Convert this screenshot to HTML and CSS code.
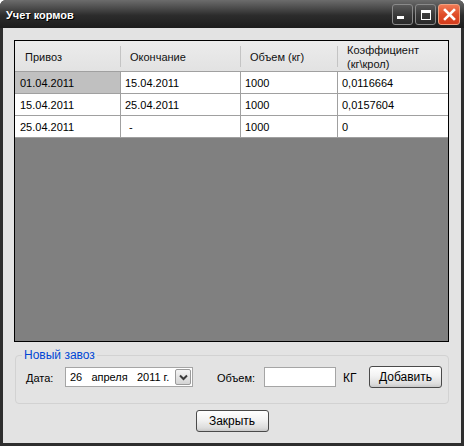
FILE: index.html
```html
<!DOCTYPE html>
<html>
<head>
<meta charset="utf-8">
<link rel="stylesheet" href="styles.css">
</head>
<body>
<div class="window">
  <div class="titlebar">
    <span class="title">Учет кормов</span>
    <div class="tbtns">
      <span class="tb"><span class="min-glyph"></span></span>
      <span class="tb"><span class="max-glyph"></span></span>
      <span class="tb close">
        <svg width="13" height="13" viewBox="0 0 13 13"><path d="M2 2 L11 11 M11 2 L2 11" stroke="#fff" stroke-width="2.6" stroke-linecap="square"/></svg>
      </span>
    </div>
  </div>
  <div class="client">
    <div class="grid">
      <div class="thead">
        <div class="hcell">Привоз</div>
        <div class="hcell">Окончание</div>
        <div class="hcell">Объем (кг)</div>
        <div class="hcell last">Коэффициент<br>(кг\крол)</div>
      </div>
      <div class="row">
        <div class="cell selected">01.04.2011</div>
        <div class="cell">15.04.2011</div>
        <div class="cell">1000</div>
        <div class="cell last">0,0116664</div>
      </div>
      <div class="row">
        <div class="cell">15.04.2011</div>
        <div class="cell">25.04.2011</div>
        <div class="cell">1000</div>
        <div class="cell last">0,0157604</div>
      </div>
      <div class="row">
        <div class="cell">25.04.2011</div>
        <div class="cell dash">-</div>
        <div class="cell">1000</div>
        <div class="cell last">0</div>
      </div>
    </div>
    <div class="group">
      <span class="legend">Новый завоз</span>
      <span class="lbl lbl-date">Дата:</span>
      <div class="datepick">
        <span class="datetext">26   апреля   2011 г.</span>
        <span class="dd">
          <svg width="9" height="7" viewBox="0 0 9 7"><path d="M1 1.5 L4.5 5 L8 1.5" stroke="#3a3a3a" stroke-width="2" fill="none"/></svg>
        </span>
      </div>
      <span class="lbl lbl-vol">Объем:</span>
      <div class="input"></div>
      <span class="lbl lbl-kg">КГ</span>
      <button class="btn">Добавить</button>
    </div>
    <div class="footer">
      <button class="btn">Закрыть</button>
    </div>
  </div>
</div>
</body>
</html>
```
FILE: styles.css
```css
* { box-sizing: border-box; }
html, body { margin: 0; padding: 0; background: #ffffff; }
body {
  font-family: "Liberation Sans", Arial, sans-serif;
  font-size: 11px;
  color: #000;
}
.window {
  width: 464px;
  height: 446px;
  background: #2e2e2e;
  border-radius: 6px 6px 0 0;
  padding: 0 3px 3px 3px;
  display: flex;
  flex-direction: column;
}
.titlebar {
  height: 28px;
  margin: 0 -3px;
  padding: 0 4px 0 6px;
  border-radius: 6px 6px 0 0;
  background: linear-gradient(#6c6c6c 0%, #4a4a4a 30%, #2c2c2c 55%, #1d1d1d 100%);
  display: flex;
  align-items: center;
  justify-content: space-between;
}
.title {
  color: #fff;
  font-weight: bold;
  font-size: 11px;
  text-shadow: 1px 1px 0 #000;
  margin-top: 2px;
}
.tbtns {
  display: flex;
  gap: 2px;
  align-items: center;
  margin-top: 1px;
}
.tb {
  width: 21px;
  height: 21px;
  border: 1px solid #8a8a8a;
  border-radius: 3px;
  background: linear-gradient(#5a5a5a, #3a3a3a 50%, #2a2a2a);
  position: relative;
  display: flex;
  align-items: center;
  justify-content: center;
}
.tb.close {
  width: 22px;
  border-color: #f0a080;
  background: linear-gradient(#f07a55, #e04e2a 50%, #d43c1c);
}
.min-glyph {
  position: absolute;
  left: 4px;
  top: 11px;
  width: 7px;
  height: 3px;
  background: #fff;
}
.max-glyph {
  width: 10px;
  height: 10px;
  border: 1px solid #fff;
  border-top-width: 3px;
}
.client {
  flex: 1;
  background: #e3e3e3;
  padding: 12px 12px 0 11px;
  display: flex;
  flex-direction: column;
}
.grid {
  height: 302px;
  border: 1px solid #000;
  background: #808080;
}
.thead, .row {
  display: grid;
  grid-template-columns: 106px 120px 97px 110px;
}
.thead {
  height: 31px;
  background: linear-gradient(#ececec, #e2e2e2);
  border-bottom: 1px solid #a0a0a0;
}
.hcell {
  position: relative;
  display: flex;
  align-items: center;
  padding: 2px 0 0 9px;
  line-height: 14px;
  color: #111;
}
.hcell:first-child { padding-left: 10px; }
.hcell::after {
  content: "";
  position: absolute;
  right: 0;
  top: 5px;
  bottom: 4px;
  width: 1px;
  background: #c4c4c4;
}
.hcell.last::after { display: none; }
.row {
  height: 22px;
  background: #fff;
  border-bottom: 1px solid #a0a0a0;
}
.cell {
  border-right: 1px solid #a0a0a0;
  display: flex;
  align-items: center;
  padding: 1px 0 0 4px;
  color: #000;
}
.cell:first-child { padding-left: 5px; }
.cell.last { border-right: none; }
.cell.selected { background: #c0c0c0; }
.cell.dash { padding-left: 8px; }
.group {
  position: relative;
  margin: 13px 0 0 1px;
  height: 49px;
  border: 1px solid #d2d2d2;
  border-radius: 4px;
  display: flex;
  align-items: flex-start;
  padding: 11px 0 0 10px;
}
.legend {
  position: absolute;
  left: 6px;
  top: -8px;
  padding: 0 2px;
  background: #e3e3e3;
  color: #0046d5;
  font-size: 12px;
  line-height: 14px;
}
.lbl {
  height: 21px;
  display: flex;
  align-items: center;
}
.lbl-date { width: 39px; }
.lbl-vol { width: 47px; }
.lbl-kg { width: 26px; font-size: 12px; }
.datepick {
  width: 128px;
  height: 20px;
  border: 1px solid #a5a5a5;
  background: #fff;
  display: flex;
  align-items: center;
  justify-content: space-between;
  padding: 0 1px 0 4px;
  margin-right: 24px;
  font-size: 11px;
}
.datetext { white-space: pre; }
.dd {
  width: 16px;
  height: 16px;
  border: 1px solid #9a9a9a;
  border-radius: 2px;
  background: linear-gradient(#f4f4f4, #d4d4d4);
  display: flex;
  align-items: center;
  justify-content: center;
}
.input {
  width: 72px;
  height: 20px;
  border: 1px solid #a5a5a5;
  background: #fff;
  margin-right: 7px;
}
.btn {
  width: 73px;
  height: 22px;
  border: 1px solid #4a4a4a;
  border-radius: 3px;
  background: linear-gradient(#ffffff, #f2f2f2 45%, #dcdcdc 85%, #c8c8c8);
  font-family: "Liberation Sans", Arial, sans-serif;
  font-size: 12px;
  color: #000;
  padding: 0;
  margin: -1px 0 0 0;
}
.footer {
  display: flex;
  justify-content: center;
  padding-top: 7px;
  padding-left: 1px;
}
```
